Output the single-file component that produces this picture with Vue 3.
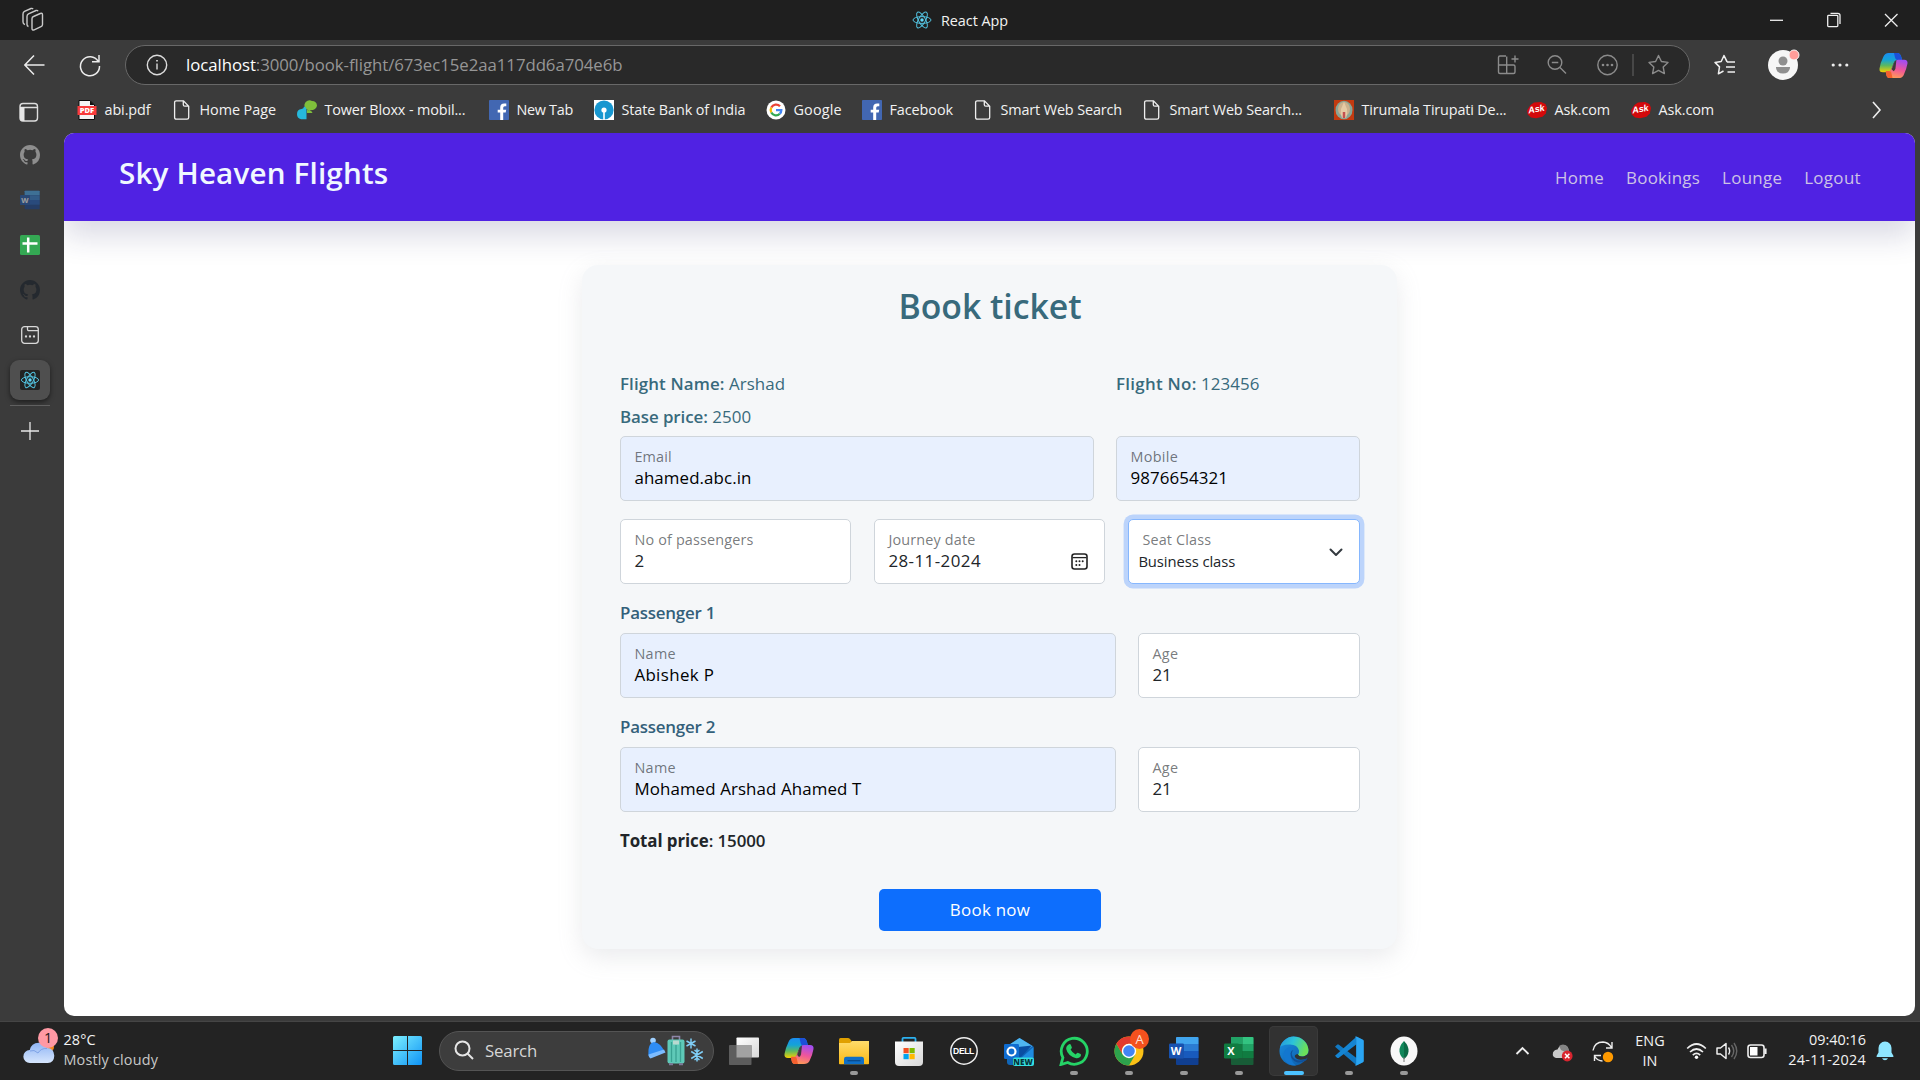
<script setup>
const bookmarks = [
  { icon: 'pdf', glyph: 'PDF', label: 'abi.pdf', width: 95, track: -0.1 },
  { icon: 'doc', label: 'Home Page', width: 125, track: -0.06 },
  { icon: 'tower', label: 'Tower Bloxx - mobil...', width: 192, track: -0.12 },
  { icon: 'fb', label: 'New Tab', width: 105, track: -0.3 },
  { icon: 'sbi', label: 'State Bank of India', width: 172, track: -0.1 },
  { icon: 'google', label: 'Google', width: 96, track: 0.15 },
  { icon: 'fb', label: 'Facebook', width: 111, track: -0.08 },
  { icon: 'doc', label: 'Smart Web Search', width: 169, track: -0.12 },
  { icon: 'doc', label: 'Smart Web Search...', width: 192, track: -0.12 },
  { icon: 'temple', label: 'Tirumala Tirupati De...', width: 193, track: -0.15 },
  { icon: 'ask', glyph: 'Ask', label: 'Ask.com', width: 104, track: -0.08 },
  { icon: 'ask', glyph: 'Ask', label: 'Ask.com', width: 90, track: -0.08 },
]

const sideTabs = [
  { icon: 'github', tone: 'grey' },
  { icon: 'word', tone: 'faded', glyph: 'W' },
  { icon: 'sheet', tone: '' },
  { icon: 'github', tone: 'dark' },
  { icon: 'newtab', tone: 'light' },
  { icon: 'reacttile', tone: 'active' },
]

const links = [
  { label: 'Home', track: 0.32 },
  { label: 'Bookings', track: 0.26 },
  { label: 'Lounge', track: 0.28 },
  { label: 'Logout', track: 0.36 },
]

const passengers = [
  { name: 'Abishek P', age: 21 },
  { name: 'Mohamed Arshad Ahamed T', age: 21 },
]

const apps = [
  { icon: 'taskview' },
  { icon: 'copilot' },
  { icon: 'folder', running: true },
  { icon: 'store' },
  { icon: 'dell', glyph: 'DELL' },
  { icon: 'outlook', glyph: 'NEW' },
  { icon: 'whatsapp', running: true },
  { icon: 'chrome', running: true, badge: 'A' },
  { icon: 'word', glyph: 'W', running: true },
  { icon: 'excel', glyph: 'X', running: true },
  { icon: 'edge', running: true, active: true },
  { icon: 'vscode', running: true },
  { icon: 'mongo', running: true },
]
</script>

<template>
  <div class="screen">
    <svg class="sprite" width="0" height="0" aria-hidden="true">
      <defs>
        <linearGradient id="cpA" x1="0" y1="0" x2="0" y2="1">
          <stop offset="0" stop-color="#1b8df0" /><stop offset=".35" stop-color="#14a3d8" />
          <stop offset=".65" stop-color="#5cb860" /><stop offset="1" stop-color="#f5d000" />
        </linearGradient>
        <linearGradient id="cpB" x1="0.6" y1="0" x2="0.3" y2="1">
          <stop offset="0" stop-color="#a24df0" /><stop offset=".5" stop-color="#f0569a" /><stop offset="1" stop-color="#ff9f52" />
        </linearGradient>
        <linearGradient id="fold" x1="0" y1="0" x2="0" y2="1"><stop offset="0" stop-color="#ffdc6b" /><stop offset="1" stop-color="#f9b914" /></linearGradient>
        <linearGradient id="winG" x1="0" y1="0" x2="1" y2="1"><stop offset="0" stop-color="#7cf0ff" /><stop offset="1" stop-color="#0f93f5" /></linearGradient>
        <linearGradient id="cloudG" x1="0" y1="0" x2="0" y2="1"><stop offset="0" stop-color="#8fb4f5" /><stop offset="1" stop-color="#d6e6fd" /></linearGradient>
        <linearGradient id="edgeTop" x1="0" y1="0" x2="1" y2="0.3"><stop offset="0" stop-color="#2592dd" /><stop offset=".5" stop-color="#2cc3d9" /><stop offset="1" stop-color="#6be05a" /></linearGradient>
        <linearGradient id="edgeLow" x1="0" y1="0" x2="1" y2="1"><stop offset="0" stop-color="#1a8fe3" /><stop offset="1" stop-color="#0c59a4" /></linearGradient>
        <linearGradient id="grayG" x1="0" y1="0" x2="1" y2="1"><stop offset="0" stop-color="#fff" /><stop offset="1" stop-color="#d8d8d8" /></linearGradient>
      </defs>
      <symbol id="react" viewBox="-12 -12 24 24">
        <g fill="none" stroke="#52c1de" stroke-width="1.2">
          <ellipse rx="10.8" ry="4.1" /><ellipse rx="10.8" ry="4.1" transform="rotate(60)" /><ellipse rx="10.8" ry="4.1" transform="rotate(120)" />
        </g>
        <circle r="2.1" fill="#61dafb" />
      </symbol>
      <symbol id="reacttile" viewBox="0 0 20 20">
        <rect width="20" height="20" rx="2" fill="#222" />
        <g transform="translate(10 10)" fill="none" stroke="#52c1de" stroke-width="1">
          <ellipse rx="8.6" ry="3.3" /><ellipse rx="8.6" ry="3.3" transform="rotate(60)" /><ellipse rx="8.6" ry="3.3" transform="rotate(120)" />
        </g>
        <circle cx="10" cy="10" r="1.7" fill="#61dafb" />
      </symbol>
      <symbol id="github" viewBox="0 0 16 16">
        <path fill="currentColor" d="M8 0C3.58 0 0 3.58 0 8c0 3.54 2.29 6.53 5.47 7.59.4.07.55-.17.55-.38v-1.49c-2.01.37-2.53-.49-2.69-.94-.09-.23-.48-.94-.82-1.13-.28-.15-.68-.52-.01-.53.63-.01 1.08.58 1.23.82.72 1.21 1.87.87 2.33.66.07-.52.28-.87.51-1.07-1.78-.2-3.64-.89-3.64-3.95 0-.87.31-1.59.82-2.15-.08-.2-.36-1.02.08-2.12 0 0 .67-.21 2.2.82a7.4 7.4 0 0 1 4 0c1.53-1.04 2.2-.82 2.2-.82.44 1.1.16 1.92.08 2.12.51.56.82 1.27.82 2.15 0 3.07-1.87 3.75-3.65 3.95.29.25.54.73.54 1.48v2.2c0 .21.15.46.55.38A8 8 0 0 0 16 8c0-4.42-3.58-8-8-8z" />
      </symbol>
      <symbol id="word" viewBox="0 0 30 30">
        <rect x="7" y="1" width="22.500" height="28" rx="1" fill="#103f91" />
        <path d="M8 1h20.500a1 1 0 0 1 1 1v6H7V2a1 1 0 0 1 1-1z" fill="#41a5ee" /><path d="M7 8h22.500v7H7z" fill="#2b7cd3" /><path d="M7 15h22.500v7H7z" fill="#185abd" />
        <rect x="0" y="7.500" width="15" height="15" rx="1.200" fill="#1853b0" />
      </symbol>
      <symbol id="excel" viewBox="0 0 30 30">
        <rect x="7" y="1" width="22.500" height="28" rx="1" fill="#185c37" />
        <path d="M7 1h11.500v7H7z" fill="#21a366" /><path d="M18.500 1h10a1 1 0 0 1 1 1v6h-11z" fill="#33c481" /><path d="M7 8h11.500v14H7z" fill="#107c41" /><path d="M18.500 8h11v7h-11z" fill="#21a366" /><path d="M18.500 15h11v7h-11z" fill="#107c41" />
        <rect x="0" y="7.500" width="15" height="15" rx="1.200" fill="#107c41" />
      </symbol>
      <symbol id="sheet" viewBox="0 0 20 20">
        <rect width="20" height="20" rx="1.600" fill="#34a853" /><path d="M2.500 8.600h15M8.200 2.500v15" stroke="#fff" stroke-width="2.500" />
      </symbol>
      <symbol id="newtab" viewBox="0 0 20 20">
        <rect x="1.700" y="1.700" width="16.600" height="16.600" rx="2.800" fill="none" stroke="currentColor" stroke-width="1.300" />
        <path d="M7.500 2v2.200q0 1.500 1.500 1.500h9" fill="none" stroke="currentColor" stroke-width="1.300" />
        <g fill="currentColor"><circle cx="6" cy="11.500" r="1.150" /><circle cx="10" cy="11.500" r="1.150" /><circle cx="14" cy="11.500" r="1.150" /></g>
      </symbol>
      <symbol id="pdf" viewBox="0 0 20 20">
        <path d="M2 .5h11l4.500 4.500v14.500H2z" fill="#f4f4f4" stroke="#0a0a0a" /><path d="M13 .5V5h4.500z" fill="#111" />
        <rect x=".5" y="6" width="19" height="9" fill="#f83b3b" />
      </symbol>
      <symbol id="doc" viewBox="0 0 20 20">
        <path d="M4.300.8h7.200l5.200 5.400v11.300q0 1.700-1.700 1.700H4.300q-1.700 0-1.700-1.700V2.500Q2.600.8 4.300.8zM11.300.8v3.900q0 1.500 1.500 1.500h3.900" fill="none" stroke="#eee" stroke-width="1.300" />
      </symbol>
      <symbol id="tower" viewBox="0 0 20 20">
        <path d="M15 1a5 5 0 1 0-2.500 9.300q3 1 3 2.700H10v-3q5.500 1 8-1Q20 7 20 5.500A5 5 0 0 0 15 1z" fill="#7fbf3b" />
        <path d="M7 6.500q2.500.5 2.500 3.500v6H4.500v-.8q1.500.8 5 .8v3.200H4q-4-1.200-4-5Q0 9.500 4.500 9q2.500-.5 2.500-2.500z" fill="#26b9dc" />
      </symbol>
      <symbol id="fb" viewBox="0 0 20 20">
        <rect width="20" height="20" rx=".8" fill="#4267b2" />
        <path d="M11.200 20v-7.400H8.700V9.700h2.500V7.500q0-4 4-4h2.100v2.700h-1.500q-1.600 0-1.600 1.500v2h3l-.5 2.900h-2.500V20z" fill="#fff" />
      </symbol>
      <symbol id="sbi" viewBox="0 0 20 20">
        <rect width="20" height="20" fill="#fff" /><circle cx="10" cy="10" r="9.600" fill="#1797d0" /><circle cx="10" cy="10" r="2.600" fill="#fff" /><path d="M9.200 10h1.600v10H9.200z" fill="#fff" />
      </symbol>
      <symbol id="google" viewBox="0 0 20 20">
        <circle cx="10" cy="10" r="9.500" fill="#fff" />
        <g fill="none" stroke-width="2.300"><path d="M14 6.300A5.300 5.300 0 0 0 5.300 7.600" stroke="#ea4335" /><path d="M5.300 7.600a5.300 5.300 0 0 0 0 4.900" stroke="#fbbc05" /><path d="M5.300 12.500a5.300 5.300 0 0 0 8.500 1.200" stroke="#34a853" /><path d="M13.800 13.700A5 5 0 0 0 15.300 10.200H10" stroke="#4285f4" /></g>
      </symbol>
      <symbol id="temple" viewBox="0 0 20 20">
        <rect width="20" height="20" fill="#c23a10" /><ellipse cx="10" cy="10" rx="8.500" ry="9.300" fill="#8aa596" /><ellipse cx="10" cy="9" rx="6" ry="7" fill="#cdb08c" />
        <path d="M10 2l3 7q1 5-1 9H8q-2-4-1-9z" fill="#e6caa4" /><path d="M10 12v6" stroke="#c45050" stroke-width="2.500" />
      </symbol>
      <symbol id="ask" viewBox="0 0 20 20">
        <path d="M3.500 5L7 2.600 14 2l4.500 2L20 8l-1.200 5.500-3.300 3.300-6.500 1.400-5-.8L.8 14.500 0 10.500z" fill="#d3090b" />
      </symbol>
      <symbol id="copilot" viewBox="0 0 30 28">
        <path d="M10 1h9q3 0 4 4l1 3.500h-5q-3 0-4 3.500l-2.500 7q-1 2-3.500 2H4q-4 0-3.500-4 1-6 4-12Q6 1 10 1z" fill="url(#cpA)" />
        <path d="M15.500 1H19q3 0 4 4l1 3.500h-5q-2 0-2.500-3z" fill="#1c4fd8" />
        <path d="M20 27h-9q-3 0-3.500-4L7 20h2.500q2.500 0 3.500-2.500L16 11q1-3 4-3h6q4 0 3.500 4-1 6-4 12-1.500 3-5.500 3z" fill="url(#cpB)" />
        <path d="M7 19.700h2.500q2 0 3 .8l1.500 6.500h-3q-3 0-3.500-4z" fill="#f4602f" />
        <path d="M13.200 18l2.600-7q.7-2 2.200-2.600l-1 9q-.6 2-2 2.600z" fill="#3b3b3b" />
      </symbol>
      <symbol id="taskview" viewBox="0 0 30 30">
        <rect x="7.500" y="1.500" width="22.500" height="20" rx=".8" fill="url(#grayG)" /><rect x="0" y="9" width="22.500" height="20" rx=".8" fill="#5d5d5d" /><path d="M7.500 9h15v12.500h-15z" fill="#a2a2a2" />
      </symbol>
      <symbol id="folder" viewBox="0 0 30 30">
        <path d="M0 3.500Q0 2 1.500 2H9q1 0 2 1l1.500 2v5H0z" fill="#e0a000" /><path d="M0 7h11l2-2h17v22.500q0 .8-.8.800H.8q-.8 0-.8-.8z" fill="url(#fold)" />
        <path d="M5 28.300V23q0-2.300 2.300-2.300h15.400Q25 20.700 25 23v5.300z" fill="#0f6fc6" /><path d="M8.500 24.700h13" stroke="#0a4a8c" stroke-width="1.300" />
      </symbol>
      <symbol id="store" viewBox="0 0 30 30">
        <path d="M8.500 6.500V2.800q0-1 1-1h11q1 0 1 1v3.700" fill="none" stroke="#2cb1f0" stroke-width="1.800" />
        <path d="M1 5.500h28V26q0 4-4 4H5q-4 0-4-4z" fill="url(#grayG)" />
        <path d="M9.500 12h5.200v5.200H9.500z" fill="#f25022" /><path d="M15.500 12h5.200v5.200h-5.200z" fill="#7fba00" /><path d="M9.500 18h5.200v5.200H9.500z" fill="#00a4ef" /><path d="M15.500 18h5.200v5.200h-5.200z" fill="#ffb900" />
      </symbol>
      <symbol id="dell" viewBox="0 0 30 30">
        <circle cx="15" cy="15" r="13.200" fill="none" stroke="#eee" stroke-width="1.500" />
      </symbol>
      <symbol id="outlook" viewBox="0 0 30 30">
        <path d="M3 10L15.500 2 29.500 10.500V26q0 3-3 3H6q-3 0-3-3z" fill="#1066b8" /><path d="M4 9.500L15.500 2l13 8-12 9z" fill="#4fb6f2" /><path d="M14 11l14-1.500L14 24z" fill="#0a4ea3" /><path d="M15 24L29.500 11v15H14z" fill="#1f8be0" />
        <rect x="0" y="8" width="15" height="15" rx="1.200" fill="#0f6cd0" /><circle cx="7.500" cy="15.500" r="4" fill="none" stroke="#fff" stroke-width="2.200" />
        <rect x="9" y="21.500" width="21" height="8.500" rx="2" fill="#35e0e0" />
      </symbol>
      <symbol id="whatsapp" viewBox="0 0 30 30">
        <path d="M2 28.500l1.900-6.900A13 13 0 1 1 8.700 26.500z" fill="none" stroke="#25d366" stroke-width="2.800" />
        <path d="M10 8.300q1.300-.8 1.800.5l1.100 2.600q.2.600-1.300 2.200 1.700 3.400 5 4.900 1.600-2 2.200-1.800l2.800 1.400q1 .6-.2 2.600-1.900 2.100-5 1.200-7.700-2.500-9.200-9-.2-3 2.800-4.600z" fill="#25d366" />
      </symbol>
      <symbol id="chrome" viewBox="0 0 30 30">
        <circle cx="15" cy="15" r="14.500" fill="#fbc116" />
        <path d="M15 15l-6.300 3.600L2.440 7.750A14.500 14.500 0 0 0 15 29.500l6.300-10.900z" fill="#2da24c" />
        <path d="M2.440 7.750A14.500 14.500 0 0 1 27.560 7.750H15a7.300 7.300 0 0 0-6.300 10.900z" fill="#e33b2e" />
        <circle cx="15" cy="15" r="7.200" fill="#fff" /><circle cx="15" cy="15" r="5.800" fill="#4285f4" />
      </symbol>
      <symbol id="edge" viewBox="0 0 30 30">
        <circle cx="15" cy="15" r="14.500" fill="url(#edgeLow)" />
        <path d="M.7 13A14.500 14.500 0 0 1 29.500 14q0 6-6.500 6.500-4 0-4-2 1.300-1.500 1-4Q18.500 8.500 11 8.500.5 8.500.7 13z" fill="url(#edgeTop)" />
        <path d="M11.500 16q.5-3.500 4.500-4.200-5-2.300-9 1.200-4.500 4.500-1 11.500 4 5.500 11 4.900-5.500-3-5.500-13.400z" fill="#1377cf" />
        <path d="M14.500 14q-3 3-.8 6.700 3.500 5.500 12 2.900l3-1.500-1.700 2.300q-4.500 2.600-8.500 2-7-2-7-9 .5-3 3-3.400z" fill="#114f96" />
        <path d="M18.500 18q1.800 3 6 2.400 5-1.200 5-5.400v4q0 2.500-3 4-8 2-10.500-2-1-2 2.500-3z" fill="#323232" />
      </symbol>
      <symbol id="vscode" viewBox="0 0 30 30">
        <path d="M22.500.8L29 4v22l-6.500 3.200L1 10.700l2.300-2.300 1.300 0L22.500 22z" fill="#1178c2" />
        <path d="M22.500 8.200L4.600 22l-1.300 0L1 19.800 22.500.8z" fill="#1585d3" />
        <path d="M21 .8q1-.5 2 0L29 3.700q.8.400.8 1.300v20q0 .9-.8 1.300l-6 2.900q-1 .5-2 0l1.200-1.400V2.200z" fill="#2aa5f3" />
      </symbol>
      <symbol id="mongo" viewBox="0 0 30 30">
        <ellipse cx="15" cy="15" rx="13.500" ry="14.500" fill="#f8f8f8" /><path d="M15 5q5 5 4.500 10.500Q19 20 15 23z" fill="#0b6b46" /><path d="M15 5q-5 5-4.500 10.500Q11 20 15 23z" fill="#10875a" /><path d="M15 21v5" stroke="#777" />
      </symbol>
    </svg>

    <header class="titlebar">
      <svg class="workspaces" width="24" height="26" viewBox="0 0 24 26" fill="none" stroke="#c9c9c9" stroke-width="1.400">
        <path d="M11.500 9.500l6.800-3q2.200-.8 2.200 1.400v9.500q0 1.500-1.500 2.200l-6.800 3.200q-2.200.9-2.200-1.300v-9.800q0-1.600 1.500-2.200z" />
        <path d="M6.500 19.500q-1.500-.5-1.500-2V9.500q0-1.900 1.500-2.700L14 3.500q1.500-.5 2 .8M3 17.500q-2-.5-2-2.500V7q0-1.900 1.500-2.700L9 1.500q1.500-.5 2 .6" />
      </svg>
      <div class="tabtitle"><svg width="20" height="20"><use href="#react" /></svg><span>React App</span></div>
      <svg class="winctl" width="132" height="20" viewBox="0 0 132 20" fill="none" stroke="#eee" stroke-width="1.300">
        <path d="M1 10.300h13" /><path d="M58.700 6.200q0-.8.800-.8h8.500q.8 0 .8.800v9.600q0 .8-.8.800h-8.500q-.8 0-.8-.8zM61.500 3.300h7.300q2.200 0 2.200 2.200v8.500" /><path d="M116 4l12.500 12.500M128.500 4L116 16.500" />
      </svg>
    </header>

    <div class="toolbar">
      <svg class="navicons" width="80" height="30" viewBox="0 0 80 30" fill="none" stroke="#ececec" stroke-width="1.500">
        <path d="M20.500 15H1M10 5.500L.8 15l9.200 9.500" />
        <path d="M74.200 11.500A9.500 9.500 0 1 0 75.500 16M75 5v6.700h-7" />
      </svg>
      <div class="omnibox">
        <svg class="info" width="22" height="22" viewBox="0 0 22 22" fill="none" stroke="#dcdcdc" stroke-width="1.400"><circle cx="11" cy="11" r="9.700" /><path d="M11 9.500v6" /><path d="M11 6v1.600" stroke-width="1.700" /></svg>
        <span class="url"><b>localhost</b>:3000/book-flight/673ec15e2aa117dd6a704e6b</span>
        <svg class="boxicons" width="182" height="30" viewBox="0 0 182 30" fill="none" stroke="#8b8b8b" stroke-width="1.400">
          <path d="M10 6H4q-1.500 0-1.500 1.500V22q0 1.500 1.500 1.500h13.500q1.500 0 1.500-1.500v-5.500q0-1.500-1.500-1.500h-15M10.700 6.500v17M15.500 9h7M19 5.500v7" />
          <circle cx="59" cy="12.500" r="6.800" /><path d="M64 17.500l6 6M55.800 12.500h6.500" />
          <circle cx="111.500" cy="15" r="9.700" /><g fill="#8b8b8b" stroke="none"><circle cx="107" cy="15" r="1.300" /><circle cx="111.500" cy="15" r="1.300" /><circle cx="116" cy="15" r="1.300" /></g>
          <path d="M137 4v22" stroke="#555" />
          <path d="M162.500 5.500l2.900 6 6.600.9-4.800 4.600 1.200 6.600-5.900-3.200-5.900 3.200 1.200-6.600-4.800-4.600 6.600-.9z" stroke-linejoin="round" />
        </svg>
      </div>
      <svg class="fav" width="22" height="22" viewBox="0 0 22 22" fill="none" stroke="#f0f0f0" stroke-width="1.500"><path d="M13.500 8L12.800 7.500 10 1.500 7.200 7.500 1 8.400l4.500 4.500L4.400 19.800 9.500 17M10 1.500l3 6.200M13 8h8M12 13h9M13.500 18H21" stroke-linejoin="round" /></svg>
      <svg class="avatar" width="32" height="32" viewBox="0 0 32 32"><circle cx="15" cy="17" r="15" fill="#f6f6f6" /><circle cx="15" cy="13" r="4.500" fill="#8f8f8f" /><path d="M8 19h14v1q-1 5.500-7 5.500T8 20z" fill="#8f8f8f" /><circle cx="26" cy="7" r="5" fill="#ff9d9a" stroke="#f6f6f6" /></svg>
      <svg class="more" width="18" height="6" viewBox="0 0 18 6" fill="#eee"><circle cx="2.200" cy="3" r="1.600" /><circle cx="9" cy="3" r="1.600" /><circle cx="15.800" cy="3" r="1.600" /></svg>
      <svg class="cp" width="29" height="27"><use href="#copilot" /></svg>
    </div>

    <div class="bookmarks">
      <svg class="panel" width="20" height="20" viewBox="0 0 20 20"><path d="M4 1.500h11.500q3 0 3 3V16q0 3-3 3H4q-3 0-3-3V4.500q0-3 3-3zM1 5.500h17.500" fill="none" stroke="#ddd" stroke-width="1.400" /><path d="M1 5h4.500v14H4q-3 0-3-3z" fill="#e6e6e6" /></svg>
      <div v-for="(b, i) in bookmarks" :key="i" class="bookmark" :style="{ width: b.width + 'px', letterSpacing: b.track + 'px' }">
        <div class="icon"><svg width="20" height="20"><use :href="'#' + b.icon" /></svg><b v-if="b.glyph" class="glyph" :class="b.icon">{{ b.glyph }}</b></div><span>{{ b.label }}</span>
      </div>
      <svg class="next" width="12" height="18" viewBox="0 0 12 18" fill="none" stroke="#eee" stroke-width="1.600"><path d="M2 1l7 8-7 8" /></svg>
    </div>

    <div class="body">
      <aside class="sidebar">
        <div v-for="(t, i) in sideTabs" :key="i" class="slot">
          <div class="tab" :class="t.tone"><div class="icon small"><svg width="20" height="20"><use :href="'#' + t.icon" /></svg><b v-if="t.glyph" class="glyph" :class="t.icon">{{ t.glyph }}</b></div></div>
        </div>
        <hr />
        <svg width="18" height="18" viewBox="0 0 18 18" stroke="#e8e8e8" stroke-width="1.300"><path d="M9 0v18M0 9h18" /></svg>
      </aside>

      <main class="page">
        <nav class="navbar">
          <h1>Sky Heaven Flights</h1>
          <ul><li v-for="l in links" :key="l.label" :style="{ letterSpacing: l.track + 'px' }">{{ l.label }}</li></ul>
        </nav>

        <section class="card">
          <h2>Book ticket</h2>
          <div class="facts"><p class="wide"><b class="fname">Flight Name:</b> Arshad</p><p><b class="fno">Flight No:</b> 123456</p></div>
          <div class="facts last"><p><b class="base">Base price:</b> 2500</p></div>

          <div class="row contact">
            <div class="field filled"><label>Email</label><div class="value">ahamed.abc.in</div></div>
            <div class="field filled"><label class="loose">Mobile</label><div class="value">9876654321</div></div>
          </div>
          <div class="row trip">
            <div class="field"><label>No of passengers</label><div class="value">2</div></div>
            <div class="field date">
              <label>Journey date</label><div class="value">28-11-2024</div>
              <svg class="cal" width="17" height="17" viewBox="0 0 17 17"><rect x="1" y="1" width="15" height="15" rx="2.500" fill="none" stroke="#222" stroke-width="1.600" /><path d="M1.500 4.600h14" stroke="#222" stroke-width="1.300" /><g fill="#222"><circle cx="5.300" cy="8.300" r="1" /><circle cx="8.500" cy="8.300" r="1" /><circle cx="11.700" cy="8.300" r="1" /><circle cx="5.300" cy="12" r="1" /><circle cx="8.500" cy="12" r="1" /></g></svg>
            </div>
            <div class="field focus">
              <label>Seat Class</label><div class="value">Business class</div>
              <svg class="caret" width="14" height="9" viewBox="0 0 14 9" fill="none" stroke="#343a40" stroke-width="2" stroke-linecap="round" stroke-linejoin="round"><path d="M1.500 1.500L7 7l5.500-5.500" /></svg>
            </div>
          </div>

          <template v-for="(p, i) in passengers" :key="i">
            <h3>Passenger {{ i + 1 }}</h3>
            <div class="row person">
              <div class="field filled"><label class="loose">Name</label><div class="value" :class="{ spread: i === 0 }">{{ p.name }}</div></div>
              <div class="field"><label class="loose">Age</label><div class="value">{{ p.age }}</div></div>
            </div>
          </template>

          <p class="total"><b>Total price</b>: 15000</p>
          <button type="button">Book now</button>
        </section>
      </main>
    </div>

    <footer class="taskbar">
      <svg class="weather" width="36" height="38" viewBox="0 0 36 38">
        <circle cx="26" cy="20" r="5" fill="#f58a1f" />
        <path d="M7 36a6.500 6.500 0 0 1-.3-13q1.500-7 9-7.300 6.500.3 8.300 5.300 7 .3 7.300 7.700-.3 7-6.500 7.300z" fill="url(#cloudG)" />
        <path d="M7 24q4-2 8 2 3-5 9-4.500" fill="none" stroke="#7fa3e6" />
        <circle cx="25" cy="11" r="10" fill="#ff99a4" /><text x="25" y="16" text-anchor="middle" class="count">1</text>
      </svg>
      <div class="wtext"><div class="deg">28°C</div><div class="cond">Mostly cloudy</div></div>
      <svg class="start" width="29" height="29" viewBox="0 0 29 29" fill="url(#winG)"><path d="M0 1.500Q0 0 1.500 0H14v14H0zM15 0h12.500Q29 0 29 1.500V14H15zM0 15h14v14H1.500Q0 29 0 27.500zM15 15h14v12.500q0 1.500-1.500 1.500H15z" /></svg>
      <div class="search">
        <svg width="20" height="20" viewBox="0 0 20 20" fill="none" stroke="#e6e6e6" stroke-width="2"><circle cx="8.500" cy="8.500" r="7" /><path d="M13.500 13.500l5.500 5.500" /></svg>
        <span>Search</span>
        <svg class="travel" width="58" height="32" viewBox="0 0 58 32">
          <circle cx="6" cy="6.500" r="2.800" fill="#9fd0ff" /><path d="M1.500 22Q.5 9 7 8q7 1 10.500 10z" fill="#2f8df5" /><path d="M1.500 20.500L17 15.500l1.500 3L3.500 24.500q-2-1-2-4z" fill="#7cbcff" />
          <path d="M25.500 6V2.500h7V6" fill="none" stroke="#8e86a8" stroke-width="1.600" /><rect x="20.500" y="5.500" width="17" height="24" rx="2" fill="#5fc9b8" /><path d="M24.500 8v20M29 11v17M33.500 8v20" stroke="#39a293" stroke-width="1.300" /><path d="M26 6.500h6v4h-6z" fill="#b9d9d0" /><path d="M22 30.300h4M32 30.300h4" stroke="#7d7898" stroke-width="2" />
          <g stroke="#7fcdf5" stroke-width="1.500" fill="none"><path d="M44 4.500v10M39.500 7l9 5M48.500 7l-9 5" /><path d="M50 14.500v13M44.200 17.500l11.600 7M55.800 17.500l-11.600 7M47.500 16l2.500 2 2.500-2M47.500 26l2.500-2 2.500 2" /></g>
        </svg>
      </div>
      <div class="apps">
        <div v-for="a in apps" :key="a.icon" class="app" :class="{ active: a.active }">
          <div class="icon"><svg width="30" height="30"><use :href="'#' + a.icon" /></svg><b v-if="a.glyph" class="glyph" :class="a.icon">{{ a.glyph }}</b></div>
          <i v-if="a.running" class="dot"></i>
          <em v-if="a.badge" class="badge">{{ a.badge }}</em>
        </div>
      </div>
      <svg class="tray" width="100" height="26" viewBox="0 0 100 26" fill="none">
        <path d="M1.500 16l6-6 6 6" stroke="#eee" stroke-width="1.900" />
        <path d="M41 20q-4-1-3-5.500 1.500-3 4.500-3 2-4.500 6-4.500 4.500.5 5 5l2 8z" fill="#c9c9c9" /><path d="M44 8q4-3 8 0 3 4 2 8l-8-4z" fill="#858585" /><circle cx="52.200" cy="18" r="5.400" fill="#d9252f" /><path d="M50 15.800l4.400 4.400M54.400 15.800L50 20.200" stroke="#fff" stroke-width="1.500" />
        <path d="M78 12.500q1.500-8.500 10-8.500 5.500.3 8.500 5.500M97 4v6h-6M79.500 23v-5.500H86M79.500 18q3 5 8 5" stroke="#eee" stroke-width="1.400" /><circle cx="93" cy="19" r="5.200" fill="#ff9a00" />
      </svg>
      <div class="lang"><div>ENG</div><div>IN</div></div>
      <svg class="status" width="82" height="24" viewBox="0 0 82 24" fill="none" stroke="#eee">
        <path d="M1.200 9.500q9.300-9 18.600 0M4 13q6.500-6 13 0M6.800 16.200q3.700-3.500 7.400 0" stroke-width="1.700" /><circle cx="10.500" cy="18.300" r="1.700" fill="#fff" stroke="none" />
        <path d="M31 9h3.500L40 4.500v15L34.500 15H31z" stroke-width="1.500" stroke-linejoin="round" /><path d="M42.500 8.500q2.300 3.500 0 7" stroke-width="1.400" /><path d="M45.500 6q4.500 6 0 12M48 4q5.500 8 0 16" stroke="#666" stroke-width="1.400" />
        <rect x="62" y="6" width="16" height="12.500" rx="2.500" stroke-width="1.600" /><rect x="64" y="8" width="7.500" height="8.500" fill="#fff" stroke="none" /><path d="M79.500 9.500v5.500" stroke-width="2.200" />
      </svg>
      <div class="clock"><div class="time">09:40:16</div><div class="day">24-11-2024</div></div>
      <svg class="bell" width="18" height="20" viewBox="0 0 18 20" fill="#8fe6ff"><path d="M9 .5q6 .5 6.500 6.500v4.500l2 3.500q.3 1-.8 1H1.300q-1.100 0-.8-1l2-3.500V7Q3 1 9 .5zM6 17.300h6q-1 2-3 2t-3-2z" /></svg>
    </footer>
  </div>
</template>

<style>
html, body { margin: 0; background: #3b3b3b; }
</style>

<style scoped>
* { box-sizing: border-box; }
.screen { width: 1920px; height: 1080px; overflow: hidden; display: flex; flex-direction: column; background: #3b3b3b; font-family: "Open Sans", "Noto Sans", sans-serif; font-size: 14.4px; color: #f2f2f2; }
.sprite { position: absolute; }
svg { display: block; flex: none; }
p, h1, h2, h3, ul { margin: 0; padding: 0; }
.count { font: 400 14.4px "Open Sans", sans-serif; fill: #26161a; }
.icon { position: relative; flex: none; }
.glyph { position: absolute; left: 0; text-align: center; color: #fff; letter-spacing: 0; white-space: nowrap; }
.glyph.pdf { width: 20px; top: 5.5px; font: 800 7.5px/10px "Open Sans", sans-serif; }
.glyph.ask { width: 19px; top: 4.500px; font: italic 700 9px/11px "Liberation Sans", sans-serif; transform: rotate(-10deg); }
.glyph.word, .glyph.excel { width: 15px; top: 7.5px; font: 700 11px/15px "Open Sans", sans-serif; }
.small .glyph.word { width: 10px; top: 5px; font-size: 7.5px; line-height: 10px; }
.glyph.dell { width: 30px; top: 10px; font: 700 8.6px/10px "Liberation Sans", sans-serif; letter-spacing: -0.4px; }
.glyph.outlook { left: 9px; width: 21px; top: 21.5px; font: 800 8px/9px "Open Sans", sans-serif; color: #06343a; }

.titlebar { height: 40px; background: #1f1f1f; display: flex; align-items: center; justify-content: space-between; padding: 0 22px; }
.workspaces { margin-right: 105px; }
.tabtitle { display: flex; align-items: center; gap: 9px; letter-spacing: -0.05px; }
.winctl { margin-right: -3px; }

.toolbar { height: 50px; display: flex; align-items: center; }
.navicons { margin-left: 24px; }
.omnibox { margin-left: 21px; width: 1565px; height: 40px; border: 1px solid #686868; border-radius: 20px; background: #292929; display: flex; align-items: center; }
.info { margin-left: 20px; }
.url { margin: -2px 0 0 18px; font-size: 16.8px; color: #969696; letter-spacing: -0.05px; }
.url b { font-weight: 400; color: #fff; }
.boxicons { margin-left: auto; margin-right: 11px; }
.fav { margin-left: 24px; }
.avatar { margin-left: 32px; margin-top: -2px; }
.more { margin-left: 31px; }
.cp { margin-left: 30px; }

.bookmarks { height: 43px; padding-bottom: 4px; display: flex; align-items: center; }
.panel { margin: 4px 38px 0 19px; }
.bookmark { display: flex; align-items: center; gap: 7.500px; white-space: nowrap; flex: none; }
.next { margin-left: 150px; }

.body { height: 888px; display: flex; }
.sidebar { width: 64px; padding-right: 4px; margin-top: -1px; display: flex; flex-direction: column; align-items: center; }
.slot { height: 45px; flex: none; display: flex; align-items: center; }
.tab { width: 40px; height: 40px; border-radius: 9px; display: flex; align-items: center; justify-content: center; }
.grey { color: #8e8e8e; }
.dark { color: #24292f; }
.light { color: #d8d8d8; }
.faded { opacity: 0.5; }
.active.tab { background: #4f4f4f; box-shadow: 0 2px 5px rgba(0, 0, 0, 0.5); }
.sidebar hr { width: 40px; height: 1px; border: 0; background: #606060; margin: 3px 0 16px; flex: none; }

.page { width: 1851px; height: 882.5px; background: #fff; border-radius: 10px; overflow: hidden; display: flex; flex-direction: column; align-items: center; color: #386a7c; }
.navbar { width: 100%; height: 88px; flex: none; background: #5022e3; padding: 0 54px 0 55px; display: flex; align-items: center; justify-content: space-between; box-shadow: 0 15px 30px rgba(35, 35, 95, 0.17); }
.navbar h1 { font-size: 29.6px; line-height: 40px; font-weight: 600; color: #f0f8ff; letter-spacing: 0.18px; margin-top: -8px; }
.navbar ul { list-style: none; display: flex; gap: 22px; font-size: 16.9px; color: #cdc3e6; }

.card { width: 815px; height: 684px; margin-top: 44px; padding: 0 37px 0 38px; background: #f5f7f9; border-radius: 16px; box-shadow: 0 8px 24px rgba(149, 157, 165, 0.2); font-size: 16.9px; }
.card h2 { font-size: 33.8px; line-height: 82px; font-weight: 600; text-align: center; letter-spacing: -0.03px; margin-bottom: 20px; }
.facts { display: flex; line-height: 33px; letter-spacing: 0.08px; }
.facts b { font-weight: 600; }
.facts .wide { width: 496px; }
.facts.last { margin-bottom: 3px; }
.fname { letter-spacing: 0.12px; }
.fno { letter-spacing: 0.28px; }
.base { letter-spacing: -0.07px; }
.row { display: grid; }
.contact { grid-template-columns: 474px 244px; column-gap: 22px; margin-bottom: 18.5px; }
.trip { grid-template-columns: 231px 231px 232px; column-gap: 23px; }
.person { grid-template-columns: 496px 222px; column-gap: 22px; }
.field { height: 64.5px; border: 1px solid #cfd5db; border-radius: 5px; background: #fff; padding: 9px 13.4px 0; position: relative; color: #212529; }
.field.filled { background: #e8f0fe; color: #000; }
.field label { display: block; font-size: 14.4px; line-height: 22px; color: rgba(33, 37, 41, 0.62); letter-spacing: 0.17px; }
.field label.loose { letter-spacing: 0.35px; }
.value { line-height: 21px; margin-top: -1px; white-space: pre; letter-spacing: 0.04px; }
.filled .value { letter-spacing: 0.1px; }
.filled .value.spread { letter-spacing: 0.36px; }
.date .value { letter-spacing: 0.45px; }
.date .cal { position: absolute; right: 16px; top: 33px; }
.focus { border-color: #86b7fe; box-shadow: 0 0 0 4.4px #bcd4fb; }
.focus .value { font-size: 14.8px; letter-spacing: -0.08px; margin: 0 0 0 -4px; }
.caret { position: absolute; right: 16px; top: 28px; }
.card h3 { font-size: 16.9px; line-height: 33px; font-weight: 600; margin: 12.5px 0 4px; letter-spacing: -0.22px; color: #33607a; }
.total { margin-top: 12.5px; line-height: 33px; font-weight: 600; color: #212529; letter-spacing: -0.08px; }
.total b { font-weight: 700; }
.card button { display: block; width: 222px; height: 42px; margin: 32px auto 0; border: 0; border-radius: 5px; background: #0d6efd; color: #fff; font: inherit; padding: 0 0 2px; letter-spacing: 0.28px; }

.taskbar { height: 59px; border-top: 1px solid #454545; background: #232323; display: flex; align-items: center; padding-bottom: 1px; }
.weather { margin: -9px 0 0 23px; }
.wtext { margin-left: 4.500px; width: 329.5px; line-height: 20px; margin-top: -2px; }
.deg { letter-spacing: 0.1px; }
.cond { letter-spacing: 0.18px; color: #c8c8c8; }
.search { margin: 0 2px 0 17px; width: 275px; height: 40px; border-radius: 20px; border: 1px solid #545454; background: #3d3d3d; display: flex; align-items: center; padding: 0 0 1px 14px; font-size: 16.8px; letter-spacing: -0.19px; color: #d6d6d6; }
.search span { margin-left: 11px; }
.travel { margin-left: auto; margin-right: 8px; }
.apps { display: flex; }
.app { width: 49px; height: 50px; margin: 0 3px; border-radius: 5px; display: flex; align-items: center; justify-content: center; position: relative; }
.app.active { background: #323232; box-shadow: inset 0 0 0 1px #3a3a3a; }
.dot { position: absolute; left: 21px; bottom: 1px; width: 8px; height: 4px; border-radius: 2px; background: #999; }
.active .dot { left: 15px; width: 20px; background: #4cc2ff; }
.badge { position: absolute; left: 26px; top: 3px; width: 19px; height: 20px; border-radius: 50%; background: #f4511e; color: #fde0d6; font: 400 13px/20px "Open Sans", sans-serif; text-align: center; }
.tray { margin-left: 84px; }
.lang { width: 30px; margin-left: 20px; text-align: center; line-height: 20px; letter-spacing: 0.07px; }
.status { margin-left: 21px; }
.clock { width: 90px; margin-left: 8px; text-align: right; line-height: 20px; margin-top: -2px; }
.day { letter-spacing: 0.26px; }
.bell { margin-left: 10px; }
</style>
